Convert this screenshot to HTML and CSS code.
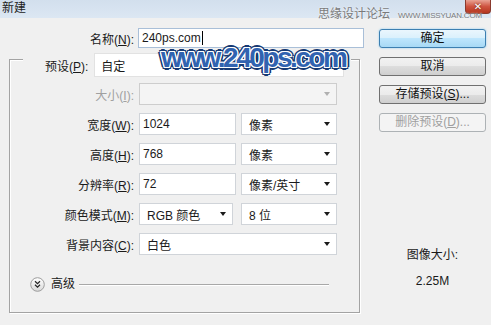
FILE: index.html
```html
<!DOCTYPE html>
<html lang="zh-CN">
<head>
    <meta charset="UTF-8">
    <title>新建</title>
    <link rel="stylesheet" href="styles.css">
</head>
<body>
    <div class="dialog">
        <div class="titlebar">
            <span class="title">新建</span>
            <span class="close">✕</span>
        </div>

        <div class="content">
            <div class="main">
                <div class="name-row">
                    <span class="name-label">名称(<u>N</u>):</span>
                    <div class="field name-input">240ps.com<span class="caret"></span></div>
                </div>

                <div class="group">
                    <div class="preset-row">
                        <span class="preset-label">预设(<u>P</u>):</span>
                        <div class="field combo preset-combo">自定</div>
                    </div>

                    <div class="row">
                        <span class="label disabled">大小(<u>I</u>):</span>
                        <div class="field combo wide off"></div>
                    </div>
                    <div class="row">
                        <span class="label">宽度(<u>W</u>):</span>
                        <div class="field input">1024</div>
                        <div class="field combo unit">像素</div>
                    </div>
                    <div class="row">
                        <span class="label">高度(<u>H</u>):</span>
                        <div class="field input">768</div>
                        <div class="field combo unit">像素</div>
                    </div>
                    <div class="row">
                        <span class="label">分辨率(<u>R</u>):</span>
                        <div class="field input">72</div>
                        <div class="field combo unit">像素/英寸</div>
                    </div>
                    <div class="row">
                        <span class="label">颜色模式(<u>M</u>):</span>
                        <div class="field combo mode">RGB 颜色</div>
                        <div class="field combo bits">8 位</div>
                    </div>
                    <div class="row">
                        <span class="label">背景内容(<u>C</u>):</span>
                        <div class="field combo wide">白色</div>
                    </div>

                    <div class="advanced">
                        <svg class="expand" width="15" height="15" viewBox="0 0 15 15">
                            <defs>
                                <linearGradient id="knob" x1="0" y1="0" x2="0" y2="1">
                                    <stop offset="0" stop-color="#ffffff"/>
                                    <stop offset="1" stop-color="#d8d8d8"/>
                                </linearGradient>
                            </defs>
                            <circle cx="7.5" cy="7.5" r="6.8" fill="url(#knob)" stroke="#9c9c9c"/>
                            <path d="M5 4.3l2.5 2.4 2.5-2.4M5 7.8l2.5 2.4 2.5-2.4" fill="none" stroke="#222" stroke-width="1.2"/>
                        </svg>
                        <span class="adv-text">高级</span>
                        <span class="adv-line"></span>
                    </div>
                </div>
            </div>

            <div class="side">
                <div class="btn default">确定</div>
                <div class="btn">取消</div>
                <div class="btn">存储预设(<u>S</u>)...</div>
                <div class="btn disabled">删除预设(<u>D</u>)...</div>
                <div class="info">
                    <div class="info-title">图像大小:</div>
                    <div class="info-value">2.25M</div>
                </div>
            </div>
        </div>

        <div class="wm-site">思缘设计论坛<span class="wm-url">WWW.MISSYUAN.COM</span></div>
        <div class="wm-logo">www.240ps.com</div>
    </div>
</body>
</html>
```

FILE: styles.css
```css
* {
	box-sizing: border-box;
}

body {
	margin: 0;
	background: #f0f0f0;
	font-family: "Liberation Sans", "Noto Sans CJK SC", sans-serif;
	font-size: 12px;
	color: #1a1a1a;
}

u {
	text-underline-offset: 1px;
}

.dialog {
	position: relative;
	width: 491px;
	height: 325px;
	overflow: hidden;
	background: #f0f0f0;
}

/* title bar */
.titlebar {
	display: flex;
	height: 18px;
	background: linear-gradient(#d2dfed, #dce7f3);
}

.title {
	padding-left: 2px;
	line-height: 16px;
	color: #222;
}

.close {
	margin-left: auto;
	width: 26px;
	height: 14px;
	border: 1px solid #8a3a2e;
	border-top: none;
	border-radius: 0 0 4px 4px;
	background: linear-gradient(#e9a394, #cf5440 50%, #b4361f);
	color: #fff;
	font: bold 10px "DejaVu Sans", sans-serif;
	line-height: 13px;
	text-align: center;
	text-shadow: 0 0 2px #5a1a10;
}

/* layout */
.content {
	display: flex;
	padding-top: 10px;
}

.main {
	width: 379px;
}

.side {
	width: 107px;
	padding-top: 1px;
	display: flex;
	flex-direction: column;
}

/* fields */
.field {
	display: flex;
	align-items: center;
	position: relative;
	height: 22px;
	background: #fff;
	border: 1px solid #d0d4d9;
	padding-left: 3px;
	white-space: nowrap;
}

.combo {
	padding-left: 7px;
}

.combo::after {
	content: "";
	position: absolute;
	right: 6px;
	top: 8px;
	border-left: 3px solid transparent;
	border-right: 3px solid transparent;
	border-top: 4px solid #1a1a1a;
}

.name-row {
	display: flex;
	align-items: center;
}

.name-label {
	width: 134px;
	text-align: right;
}

.name-input {
	margin-left: 4px;
	width: 226px;
	height: 20px;
	border-color: #a9bfd8;
}

.caret {
	width: 1px;
	height: 14px;
	margin-left: 1px;
	background: #000;
}

/* group box */
.group {
	margin: 11px 0 0 9px;
	width: 351px;
	border: 1px solid #a3a3a3;
	box-shadow: 1px 1px 0 #fff, inset 1px 1px 0 #fff;
	padding-bottom: 20px;
}

.preset-row {
	display: flex;
	align-items: center;
	margin: -7px 0 0 13px;
	width: 328px;
	height: 24px;
	background: #f0f0f0;
}

.preset-label {
	margin-left: 22px;
}

.preset-combo {
	margin-left: 6px;
	width: 250px;
	height: 24px;
	border-color: #e2e2e2;
	padding-left: 6px;
}

.preset-combo::after {
	display: none;
}

.row {
	display: flex;
	align-items: center;
	margin-top: 8px;
}

.preset-row + .row {
	margin-top: 6px;
}

.label {
	width: 124px;
	margin-right: 5px;
	text-align: right;
}

.label.disabled {
	color: #a0a0a0;
}

.input {
	width: 97px;
}

.unit {
	margin-left: 5px;
	width: 96px;
}

.wide {
	width: 198px;
}

.mode {
	width: 94px;
}

.bits {
	margin-left: 8px;
	width: 96px;
}

.off {
	background: #f4f4f4;
	border-color: #cdcdcd;
}

.off::after {
	border-top-color: #b0b0b0;
}

.advanced {
	display: flex;
	align-items: center;
	margin-top: 22px;
	height: 15px;
}

.expand {
	margin-left: 20px;
}

.adv-text {
	margin-left: 6px;
	line-height: 15px;
}

.adv-line {
	margin: 0 30px 0 4px;
	flex: 1;
	height: 2px;
	border-top: 1px solid #a8a8a8;
	border-bottom: 1px solid #fff;
}

/* buttons */
.btn {
	height: 19px;
	margin-bottom: 9px;
	border: 1px solid #707070;
	border-radius: 3px;
	background: linear-gradient(#f2f2f2, #ebebeb 50%, #dddddd 50%, #cfcfcf);
	line-height: 17px;
	text-align: center;
	color: #111;
}

.btn.default {
	border-color: #3c7fb1;
	background: linear-gradient(#eaf6fd, #d9f0fc 50%, #bee6fd 50%, #a7d9f5);
	box-shadow: 0 0 2px #7fc5ee;
}

.btn.disabled {
	border-color: #adb2b5;
	background: #f4f4f4;
	color: #a0a0a0;
}

.info {
	margin-top: 107px;
	text-align: center;
	line-height: 14px;
}

.info-value {
	margin-top: 12px;
}

/* watermarks over the dialog */
.wm-site {
	position: absolute;
	left: 318px;
	top: 7px;
	line-height: 15px;
	white-space: nowrap;
	color: #7a7a7a;
	text-shadow: 0 0 2px #fff;
}

.wm-url {
	margin-left: 8px;
	font-size: 8px;
	letter-spacing: -0.2px;
}

.wm-logo {
	position: absolute;
	left: 161px;
	top: 48px;
	font: bold 28px/20px "Liberation Sans", sans-serif;
	letter-spacing: -2.5px;
	white-space: nowrap;
	color: #3163b0;
	text-shadow:
		1px 0 0 #fff, -1px 0 0 #fff, 0 1px 0 #fff, 0 -1px 0 #fff,
		1px 1px 0 #fff, -1px -1px 0 #fff, 1px -1px 0 #fff, -1px 1px 0 #fff,
		2px 0 0 #173a73, -2px 0 0 #173a73, 0 2px 0 #173a73, 0 -2px 0 #173a73,
		2px 2px 0 #173a73, -2px -2px 0 #173a73, 2px -2px 0 #173a73, -2px 2px 0 #173a73,
		3px 0 0 #173a73, -3px 0 0 #173a73, 0 3px 0 #173a73, 0 -3px 0 #173a73;
}
```
